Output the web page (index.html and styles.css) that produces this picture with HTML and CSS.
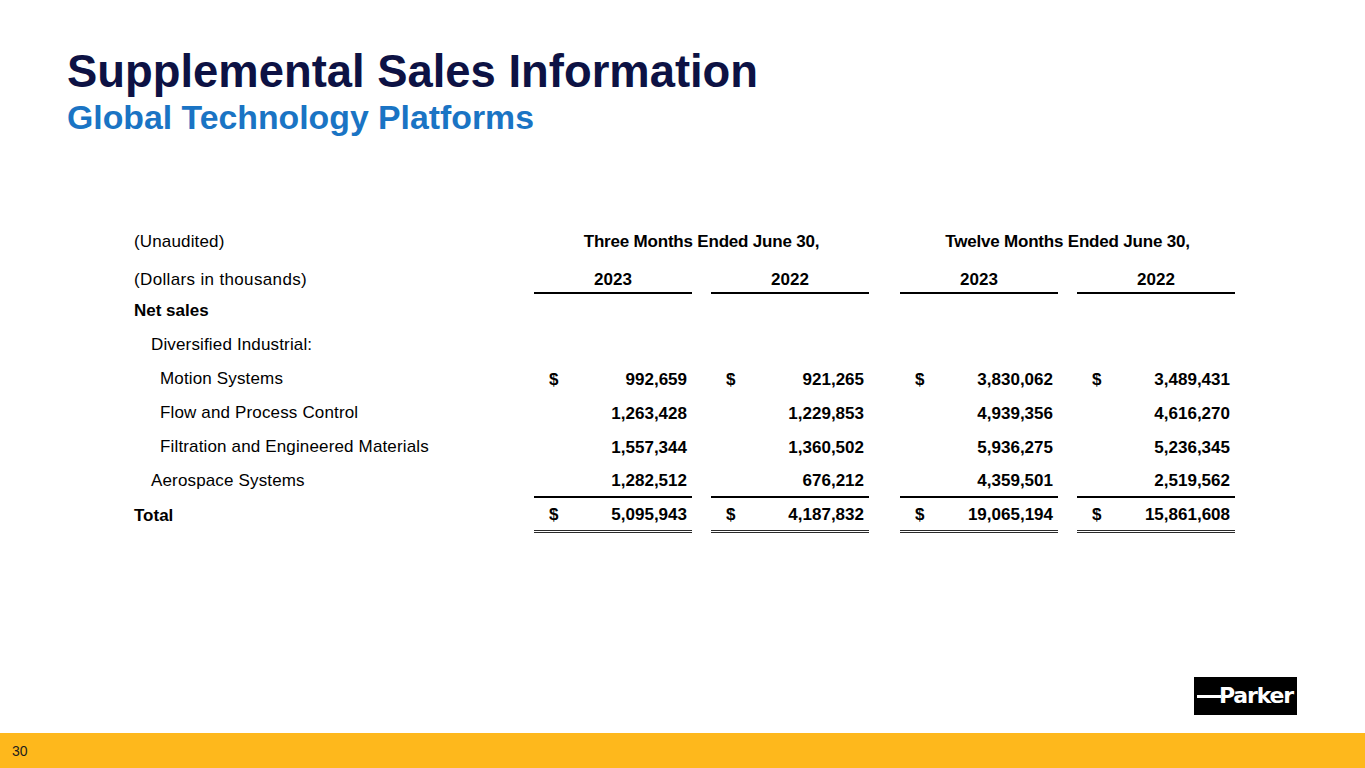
FILE: index.html
```html
<!DOCTYPE html>
<html lang="en">
<head>
<meta charset="utf-8">
<title>Supplemental Sales Information</title>
<link rel="stylesheet" href="styles.css">
</head>
<body>
<div class="slide">
  <header class="head">
    <h1 class="title">Supplemental Sales Information</h1>
    <h2 class="subtitle">Global Technology Platforms</h2>
  </header>

  <section class="fin">
    <div class="row row-group">
      <div class="lbl">(Unaudited)</div>
      <div class="grp grp-a">Three Months Ended June 30,</div>
      <div class="grp grp-b">Twelve Months Ended June 30,</div>
    </div>
    <div class="row row-years">
      <div class="lbl">(Dollars in thousands)</div>
      <div class="yr c1">2023</div>
      <div class="yr c2">2022</div>
      <div class="yr c3">2023</div>
      <div class="yr c4">2022</div>
    </div>
    <div class="row">
      <div class="lbl strong">Net sales</div>
    </div>
    <div class="row">
      <div class="lbl ind1">Diversified Industrial:</div>
    </div>
    <div class="row">
      <div class="lbl ind2">Motion Systems</div>
      <div class="num c1"><span>$</span><span class="v">992,659</span></div>
      <div class="num c2"><span>$</span><span class="v">921,265</span></div>
      <div class="num c3"><span>$</span><span class="v">3,830,062</span></div>
      <div class="num c4"><span>$</span><span class="v">3,489,431</span></div>
    </div>
    <div class="row">
      <div class="lbl ind2">Flow and Process Control</div>
      <div class="num c1"><span class="v">1,263,428</span></div>
      <div class="num c2"><span class="v">1,229,853</span></div>
      <div class="num c3"><span class="v">4,939,356</span></div>
      <div class="num c4"><span class="v">4,616,270</span></div>
    </div>
    <div class="row">
      <div class="lbl ind2">Filtration and Engineered Materials</div>
      <div class="num c1"><span class="v">1,557,344</span></div>
      <div class="num c2"><span class="v">1,360,502</span></div>
      <div class="num c3"><span class="v">5,936,275</span></div>
      <div class="num c4"><span class="v">5,236,345</span></div>
    </div>
    <div class="row row-sub">
      <div class="lbl ind1">Aerospace Systems</div>
      <div class="num c1"><span class="v">1,282,512</span></div>
      <div class="num c2"><span class="v">676,212</span></div>
      <div class="num c3"><span class="v">4,359,501</span></div>
      <div class="num c4"><span class="v">2,519,562</span></div>
    </div>
    <div class="row row-total">
      <div class="lbl strong">Total</div>
      <div class="num c1"><span>$</span><span class="v">5,095,943</span></div>
      <div class="num c2"><span>$</span><span class="v">4,187,832</span></div>
      <div class="num c3"><span>$</span><span class="v">19,065,194</span></div>
      <div class="num c4"><span>$</span><span class="v">15,861,608</span></div>
    </div>
  </section>

  <div class="logo-row">
    <div class="logo"><span class="logo-bar"></span><span class="logo-text">Parker</span></div>
  </div>

  <footer class="foot"><span class="page">30</span></footer>
</div>
</body>
</html>
```

FILE: styles.css
```css
* { box-sizing: border-box; }

html, body {
  margin: 0;
  padding: 0;
  background: #ffffff;
}

.slide {
  width: 1365px;
  height: 768px;
  overflow: hidden;
  display: flex;
  flex-direction: column;
  font-family: "Liberation Sans", Arial, sans-serif;
  color: #000;
}

.head {
  padding: 49px 0 0 67px;
}

.title {
  margin: 0;
  font-size: 45.4px;
  line-height: 45px;
  font-weight: 700;
  color: #0d1244;
}

.subtitle {
  margin: 7px 0 0 0;
  font-size: 33.8px;
  line-height: 33px;
  font-weight: 700;
  color: #1a74c4;
}

.fin {
  margin-top: 91px;
  padding-left: 134px;
  font-size: 17px;
}

.row {
  display: grid;
  grid-template-columns: 400px 158px 19px 158px 31px 158px 19px 158px;
  height: 34px;
  align-items: stretch;
}

.lbl {
  grid-column: 1;
  display: flex;
  align-items: center;
  white-space: nowrap;
  letter-spacing: 0.15px;
}
.lbl-wide { letter-spacing: 0.3px; }

.strong { font-weight: 700; letter-spacing: 0; }
.ind1 { padding-left: 17px; }
.ind2 { padding-left: 26px; }

.c1 { grid-column: 2; }
.c2 { grid-column: 4; }
.c3 { grid-column: 6; }
.c4 { grid-column: 8; }

.grp {
  display: flex;
  align-items: center;
  justify-content: center;
  font-weight: 700;
  white-space: nowrap;
  letter-spacing: -0.2px;
}
.grp-a { grid-column: 2 / 5; }
.grp-b { grid-column: 6 / 9; }

.row-years {
  height: 35px;
}
.row-years .lbl {
  align-items: flex-end;
  padding-bottom: 4px;
  letter-spacing: 0.35px;
}
.yr {
  display: flex;
  align-items: flex-end;
  justify-content: center;
  padding-bottom: 2px;
  font-weight: 700;
  border-bottom: 2px solid #000;
}

.num {
  display: flex;
  align-items: center;
  padding: 1px 5px 0 15px;
  font-weight: 700;
}
.num .v { margin-left: auto; }

.row-sub .num {
  border-bottom: 2px solid #000;
}

.row-total {
  height: 35px;
}
.row-total .num {
  border-bottom: 3px double #2a2a2a;
}

.logo-row {
  margin-top: auto;
  display: flex;
  justify-content: flex-end;
  padding-right: 68px;
  margin-bottom: 18px;
}

.logo {
  width: 103px;
  height: 38px;
  background: #000;
  display: flex;
  align-items: center;
  padding-left: 3px;
}
.logo-bar {
  width: 24px;
  height: 3px;
  background: #fff;
  margin-top: 1px;
  margin-right: -2px;
}
.logo-text {
  color: #fff;
  font-family: "DejaVu Sans", "Liberation Sans", sans-serif;
  font-weight: 700;
  font-size: 22px;
  line-height: 1;
  letter-spacing: -1.2px;
  transform: scaleY(0.95);
}

.foot {
  height: 35px;
  background: #feb81c;
  display: flex;
  align-items: center;
  padding-left: 12px;
}
.page {
  font-size: 14px;
  color: #1d1d1d;
}
```
